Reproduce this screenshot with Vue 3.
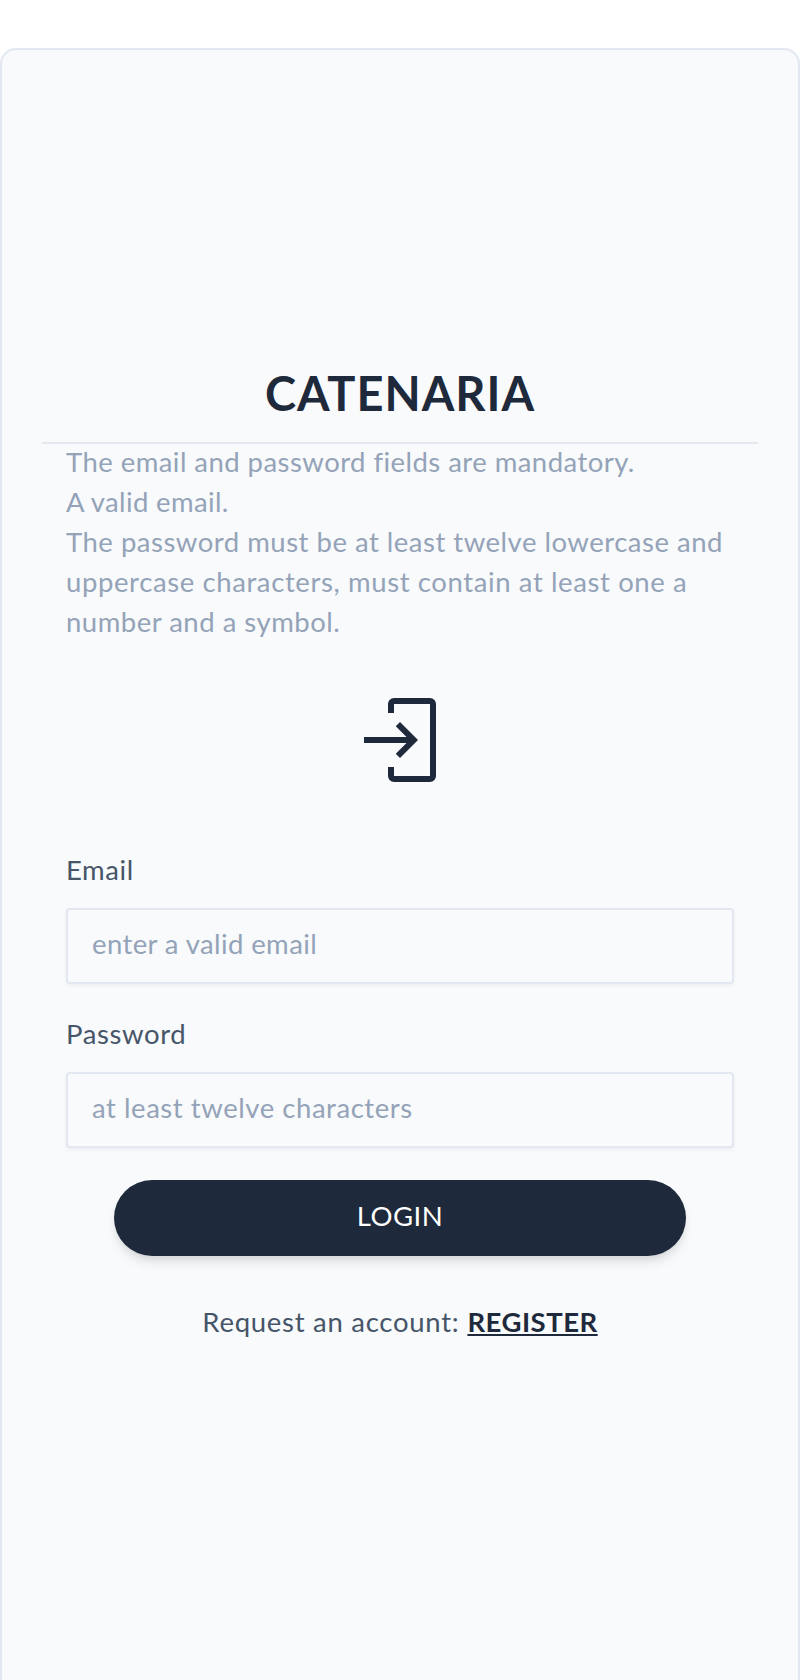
<script setup>
import { ref } from 'vue'

const email = ref('')
const password = ref('')
</script>

<template>
  <main class="card">
    <header class="head">
      <h1 class="title">CATENARIA</h1>
    </header>

    <div class="body">
      <div class="rules">
        <p class="rule r1">The email and password fields are mandatory.</p>
        <p class="rule r2">A valid email.</p>
        <p class="rule r3">The password must be at least twelve lowercase and</p>
        <p class="rule r4">uppercase characters, must contain at least one a</p>
        <p class="rule r5">number and a symbol.</p>
      </div>

      <svg class="icon" viewBox="0 0 24 24" aria-hidden="true">
        <path
          fill="currentColor"
          d="M10.5 1.5H19.5A1.5 1.5 0 0 1 21 3V21A1.5 1.5 0 0 1 19.5 22.5H10.5A1.5 1.5 0 0 1 9 21V18.75H10.5V21H19.5V3H10.5V5.25H9V3A1.5 1.5 0 0 1 10.5 1.5Z"
        />
        <path
          fill="currentColor"
          d="M12 7.5L10.94 8.56L13.63 11.25H3V12.75H13.63L10.94 15.44L12 16.5L16.5 12Z"
        />
      </svg>

      <form class="form" @submit.prevent>
        <label class="label l-email" for="email">Email</label>
        <input id="email" v-model="email" class="input i-email" type="email" placeholder="enter a valid email" />
        <label class="label l-pass" for="password">Password</label>
        <input id="password" v-model="password" class="input i-pass" type="password" placeholder="at least twelve characters" />
        <button class="button" type="submit">LOGIN</button>
      </form>

      <p class="request">
        <span class="ask">Request an account:</span>
        <a class="register" href="#">REGISTER</a>
      </p>
    </div>
  </main>
</template>

<style>
body {
  background: #fff;
  overflow: hidden;
}
</style>

<style scoped>
.card {
  box-sizing: border-box;
  height: 1680px;
  margin-top: 48px;
  padding: 313px 40px 0;
  border: 2px solid #e2e8f0;
  border-radius: 16px;
  background: #f8fafc;
  color: #475569;
  font: 27.5px/40px Lato, "Open Sans", sans-serif;
}
.head {
  padding-bottom: 19px;
  border-bottom: 2px solid #e2e8f0;
}
.title {
  margin: 0;
  color: #1e293b;
  font-size: 47px;
  line-height: 60px;
  font-weight: 700;
  letter-spacing: 0.97px;
  text-align: center;
}
.body {
  display: flex;
  flex-direction: column;
  margin-top: -2px;
  padding: 0 24px;
}
.rule {
  margin: 0;
  color: #94a3b8;
  white-space: nowrap;
}
.r1 { letter-spacing: 0.45px; }
.r2 { letter-spacing: 0.36px; }
.r3 { letter-spacing: 0.5px; }
.r4 { letter-spacing: 0.61px; }
.r5 { letter-spacing: 0.5px; }
.icon {
  align-self: center;
  width: 96px;
  height: 96px;
  margin-top: 50px;
  color: #1e293b;
}
.form {
  display: flex;
  flex-direction: column;
  margin-top: 62px;
}
.label {
  letter-spacing: 0.6px;
}
.l-pass {
  margin-top: 30px;
}
.input {
  box-sizing: border-box;
  height: 76px;
  margin: 18px 0 0;
  padding: 0 24px 5px;
  border: 2px solid #e2e8f0;
  border-radius: 4px;
  background: #f8fafc;
  box-shadow: 0 2px 4px rgba(0, 0, 0, 0.05);
  color: #475569;
  font: inherit;
  outline: none;
}
.input::placeholder {
  color: #94a3b8;
  opacity: 1;
}
.i-email { letter-spacing: 0.4px; }
.i-pass { letter-spacing: 0.55px; }
.button {
  height: 76px;
  margin: 32px 48px 0;
  padding: 0 0 5px;
  border: 0;
  border-radius: 38px;
  background: #1e293b;
  box-shadow: 0 8px 12px -2px rgba(0, 0, 0, 0.1), 0 4px 8px -4px rgba(0, 0, 0, 0.1);
  color: #fff;
  font: inherit;
  letter-spacing: 0.5px;
}
.request {
  display: flex;
  justify-content: center;
  gap: 8px;
  margin: 46px 0 0;
}
.ask {
  letter-spacing: 0.73px;
}
.register {
  color: #1e293b;
  font-weight: 700;
  letter-spacing: 0.5px;
  text-decoration: underline;
  text-decoration-thickness: 2px;
  text-underline-offset: 2px;
  text-decoration-skip-ink: none;
}
</style>
